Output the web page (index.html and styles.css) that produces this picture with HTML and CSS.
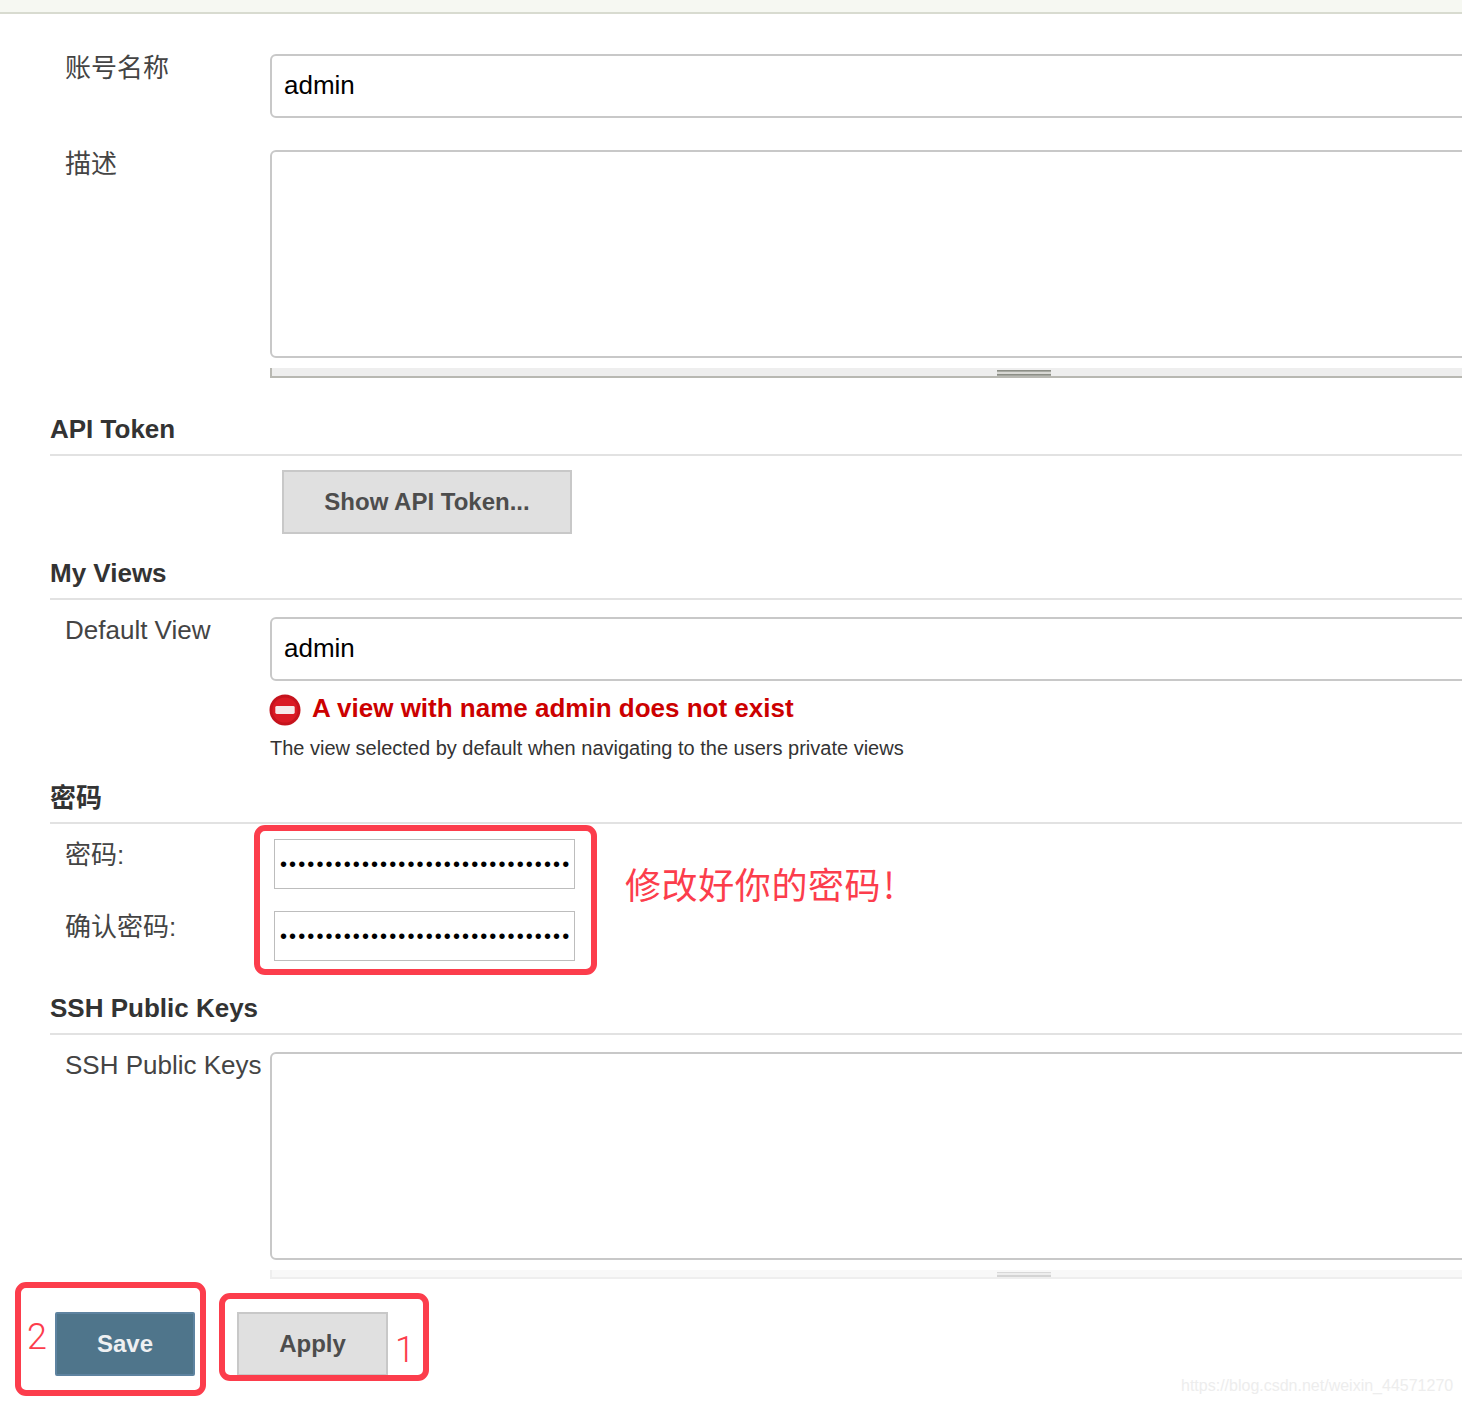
FILE: index.html
```html
<!DOCTYPE html>
<html>
<head>
    <meta name="viewport" content="width=device-width, initial-scale=1.0">
    <title>用户设置</title>
    <link rel="stylesheet" href="styles.css">
</head>
<body>
    <div class="topbar"></div>
    <form class="page">
        <div class="row row-name">
            <label class="label label-cjk">账号名称</label>
            <div class="field"><input class="text-input" type="text" value="admin"></div>
        </div>
        <div class="row row-desc">
            <label class="label label-cjk">描述</label>
            <div class="field">
                <div class="text-area"></div>
                <div class="grip"><span></span></div>
            </div>
        </div>

        <h3 class="section section-api">API Token</h3>
        <div class="token-row"><button type="button" class="btn btn-token">Show API Token...</button></div>

        <h3 class="section section-views">My Views</h3>
        <div class="row row-view">
            <label class="label">Default View</label>
            <div class="field"><input class="text-input" type="text" value="admin"></div>
        </div>
        <div class="error">
            <svg class="error-icon" width="32" height="32" viewBox="0 0 33 33">
                <circle cx="16.5" cy="16.5" r="16" fill="#c5131d"/>
                <circle cx="16.5" cy="16.5" r="13" fill="#da1a24"/>
                <rect x="6.5" y="12.5" width="20" height="8" rx="1.5" fill="#f6e9e9"/>
            </svg>
            <span class="error-text">A view with name admin does not exist</span>
        </div>
        <p class="help">The view selected by default when navigating to the users private views</p>

        <h3 class="section section-pass">密码</h3>
        <div class="row row-pass">
            <label class="label label-pass">密码:</label>
            <input class="pass-input" type="password" value="aaaaaaaaaaaaaaaaaaaaaaaaaaaaaaaa">
        </div>
        <div class="row row-pass row-pass2">
            <label class="label label-pass">确认密码:</label>
            <input class="pass-input" type="password" value="aaaaaaaaaaaaaaaaaaaaaaaaaaaaaaaa">
        </div>

        <h3 class="section section-ssh">SSH Public Keys</h3>
        <div class="row row-ssh">
            <label class="label">SSH Public Keys</label>
            <div class="field">
                <div class="text-area"></div>
                <div class="grip grip-light"><span></span></div>
            </div>
        </div>

        <div class="actions">
            <button type="button" class="btn btn-save">Save</button>
            <button type="button" class="btn btn-apply">Apply</button>
        </div>
    </form>

    <div class="mark mark-pass"></div>
    <div class="mark mark-save"></div>
    <div class="mark mark-apply"></div>
    <div class="note note-pass">修改好你的密码<span>!</span></div>
    <div class="note note-two">2</div>
    <div class="note note-one">1</div>
    <div class="watermark">https://blog.csdn.net/weixin_44571270</div>
</body>
</html>
```

FILE: styles.css
```css
html, body { margin: 0; padding: 0; }
body { position: relative; height: 1404px; overflow: hidden; background: #fff; color: #333; font-family: "Liberation Sans", "Noto Sans CJK SC", sans-serif; font-size: 26px; }

.topbar { height: 12px; background: #f6f8f2; border-bottom: 2px solid #d8dbd0; }
.page { padding-left: 50px; }

.row { display: flex; align-items: flex-start; }
.row-name { padding-top: 40px; }
.row-desc { padding-top: 32px; }
.row-view { padding-top: 17px; }
.row-pass { padding-top: 15px; }
.row-pass2 { padding-top: 22px; }
.row-ssh { padding-top: 17px; }

.label { width: 205px; flex: none; padding-left: 15px; box-sizing: border-box; line-height: 26px; white-space: nowrap; color: #444; }
.label-cjk { padding-top: 1px; }
.label-pass { padding-top: 3px; }
.field { width: 1508px; flex: none; margin-left: 15px; margin-right: -2000px; }

.text-input { display: block; width: 100%; height: 64px; box-sizing: border-box; padding: 0 12px 2px; border: 2px solid #c8c8c8; border-radius: 6px; background: #fff; color: #000; font: 26px "Liberation Sans", sans-serif; outline: none; }
.text-area { height: 208px; box-sizing: border-box; border: 2px solid #c8c8c8; border-radius: 6px; background: #fff; }

.grip { height: 8px; margin-top: 10px; background: #eee; border-bottom: 2px solid #b8b8b2; border-left: 2px solid #b8b8b2; position: relative; }
.grip span { position: absolute; left: 725px; top: 2px; width: 54px; height: 6px; background: linear-gradient(#8c8e86 0 1px, #a8aaa3 1px 2px, #d8d8d4 2px 4px, #8c8e86 4px 5px, #a4a69f 5px 6px); }
.grip-light { height: 7px; background: #f8f8f8; border-color: #eeeeee; }
.grip-light span { height: 5px; background: linear-gradient(#d8d8d8 0 1px, #eeeeee 1px 3px, #d4d4d4 3px 5px); }

.section { margin: 0; font-size: 26px; font-weight: bold; line-height: 30px; color: #333; border-bottom: 2px solid #e2e2e2; padding-bottom: 10px; }
.section-api { padding-top: 36px; }
.section-views { padding-top: 24px; }
.section-pass { padding-top: 22px; padding-bottom: 9px; }
.section-ssh { padding-top: 32px; }

.token-row { padding: 14px 0 0 232px; }
.btn { display: block; height: 64px; box-sizing: border-box; font: bold 24px "Liberation Sans", sans-serif; cursor: pointer; }
.btn-token { width: 290px; background: #e0e0e0; border: 2px solid #c8c8c8; color: #4d4d4d; }

.error { display: flex; align-items: center; margin: 13px 0 0 220px; height: 33px; color: #cc0000; font-weight: bold; font-size: 26px; }
.error-icon { margin: 0 11px 1px -1px; flex: none; }
.error-text { padding-bottom: 4px; }
.help { margin: 8px 0 0 220px; font-size: 20px; line-height: 26px; color: #333; }

.pass-input { display: block; width: 301px; height: 50px; box-sizing: border-box; margin-left: 19px; padding: 0 5px; border: 1px solid #bdbdbd; background: #fff; color: #000; font: 20px "Liberation Sans", sans-serif; letter-spacing: 2.1px; outline: none; }

.actions { display: flex; padding: 33px 0 0 5px; }
.btn-save { width: 140px; background: #4f758b; border: 2px solid #5e83a0; border-radius: 2px; color: #eef0f2; }
.btn-apply { width: 151px; margin-left: 42px; background: #e0e0e0; border: 2px solid #c8c8c8; color: #4d4d4d; }

.mark { position: absolute; box-sizing: border-box; border: 6px solid #fc3d4c; border-radius: 11px; }
.mark-pass { left: 254px; top: 825px; width: 343px; height: 150px; }
.mark-save { left: 15px; top: 1282px; width: 191px; height: 114px; }
.mark-apply { left: 219px; top: 1293px; width: 210px; height: 88px; }

.note { position: absolute; color: #fc3d4c; line-height: 1; }
.note-pass { left: 625px; top: 865px; font-family: "Noto Sans CJK SC", sans-serif; font-size: 36px; letter-spacing: 0.6px; }
.note-pass span { margin-left: 2px; }
.note-two { left: 27px; top: 1319px; font-size: 36px; font-family: Roboto, sans-serif; font-weight: 300; }
.note-one { left: 395px; top: 1332px; font-size: 36px; font-family: Roboto, sans-serif; font-weight: 300; }

.watermark { position: absolute; left: 1181px; top: 1376px; font-size: 16px; line-height: 20px; color: #ededed; white-space: nowrap; }
```
